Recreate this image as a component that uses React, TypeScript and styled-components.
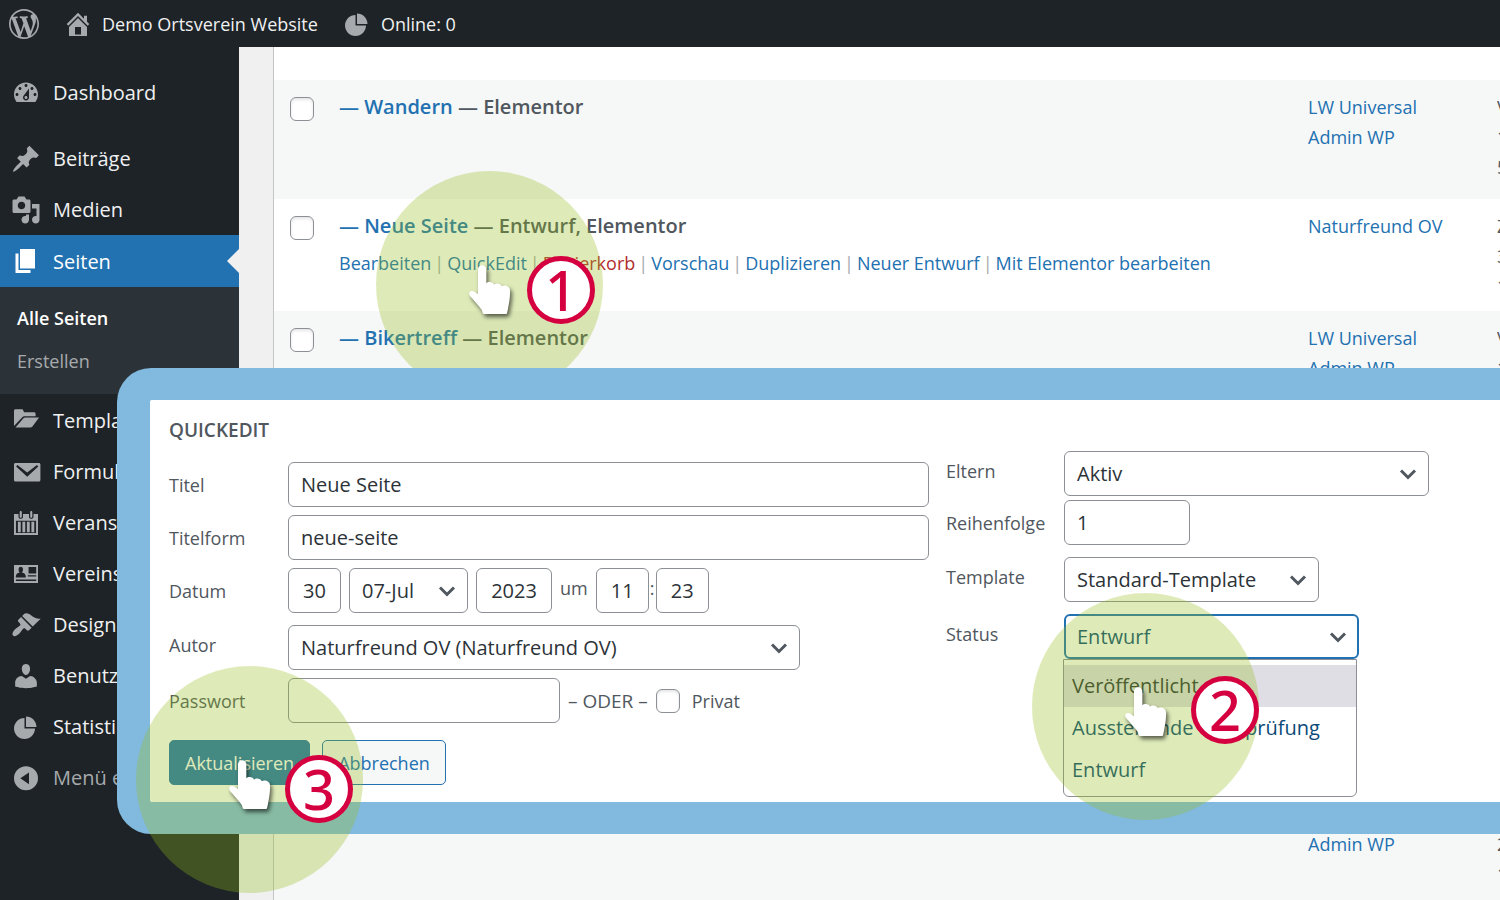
import React from 'react';
import styled, { createGlobalStyle, css } from 'styled-components';

const font = "'Open Sans', 'Noto Sans', sans-serif";

const GlobalStyle = createGlobalStyle`
  *, *::before, *::after { box-sizing: border-box; }
  body { margin: 0; background: #f0f0f1; font-family: ${font}; font-size: 18px; color: #50575e; }
  ul { margin: 0; padding: 0; list-style: none; }
  a { text-decoration: none; }
  input, select, button { font-family: inherit; }
`;

/* ---------- icons ---------- */

const icons: Record<string, string> = {
  wordpress:
    'M20 10c0-5.51-4.49-10-10-10C4.48 0 0 4.49 0 10c0 5.52 4.48 10 10 10 5.51 0 10-4.48 10-10zM7.78 15.37L4.37 6.22c.55-.02 1.17-.08 1.17-.08.5-.06.44-1.13-.06-1.11 0 0-1.45.11-2.37.11-.18 0-.37 0-.58-.01C4.12 2.69 6.87 1.11 10 1.11c2.33 0 4.45.87 6.05 2.34-.68-.11-1.65.39-1.65 1.58 0 .74.45 1.36.9 2.1.35.61.55 1.36.55 2.46 0 1.49-1.4 5-1.4 5l-3.03-8.37c.54-.02.82-.17.82-.17.5-.05.44-1.25-.06-1.22 0 0-1.44.12-2.38.12-.87 0-2.33-.12-2.33-.12-.5-.03-.56 1.2-.06 1.22l.92.08 1.26 3.41zM17.41 10c.24-.64.74-1.87.43-4.25.7 1.29 1.05 2.71 1.05 4.25 0 3.29-1.73 6.24-4.4 7.78.97-2.59 1.94-5.2 2.92-7.78zM6.1 18.09C3.12 16.65 1.11 13.53 1.11 10c0-1.3.23-2.48.72-3.59C3.25 10.3 4.67 14.2 6.1 18.09zm4.03-6.63l2.58 6.98c-.86.29-1.76.45-2.71.45-.79 0-1.57-.11-2.29-.33.81-2.38 1.62-4.74 2.42-7.1z',
  home: 'M16 8.5l1.53 1.53-1.06 1.06L10 4.6l-6.47 6.49-1.06-1.06L10 2.5l4 4v-2h2v4zm-6-2.46l6 5.99V18H4v-5.97zM12 17v-5H8v5h4z',
  pie: 'M10 10V3c3.87 0 7 3.13 7 7h-7zM9 4v7h7c0 3.87-3.13 7-7 7s-7-3.13-7-7 3.13-7 7-7z',
  dashboard:
    'M3.76 16h12.48c1.1-1.37 1.76-3.11 1.76-5 0-4.42-3.58-8-8-8s-8 3.58-8 8c0 1.89.66 3.63 1.76 5zM10 4c.55 0 1 .45 1 1s-.45 1-1 1-1-.45-1-1 .45-1 1-1zM6 6c.55 0 1 .45 1 1s-.45 1-1 1-1-.45-1-1 .45-1 1-1zm8 0c.55 0 1 .45 1 1s-.45 1-1 1-1-.45-1-1 .45-1 1-1zm-5.37 5.55L12 7v6c0 1.1-.9 2-2 2s-2-.9-2-2c0-.57.24-1.08.63-1.45zM4 10c.55 0 1 .45 1 1s-.45 1-1 1-1-.45-1-1 .45-1 1-1zm12 0c.55 0 1 .45 1 1s-.45 1-1 1-1-.45-1-1 .45-1 1-1zm-5 3c0-.55-.45-1-1-1s-1 .45-1 1 .45 1 1 1 1-.45 1-1z',
  post: 'M10.44 3.02l1.82-1.82 6.36 6.35-1.83 1.82c-1.05-.68-2.48-.57-3.41.36l-.75.75c-.92.93-1.04 2.35-.35 3.41l-1.83 1.82-2.41-2.41-2.8 2.79c-.42.42-3.38 2.71-3.8 2.29s1.86-3.39 2.28-3.81l2.79-2.79L4.1 9.36l1.83-1.82c1.05.69 2.48.57 3.4-.36l.75-.75c.93-.92 1.05-2.35.36-3.41z',
  media:
    'M13 11V4c0-.55-.45-1-1-1h-1.67L9 1H5L3.67 3H2c-.55 0-1 .45-1 1v7c0 .55.45 1 1 1h10c.55 0 1-.45 1-1zM7 4.5c1.38 0 2.5 1.12 2.5 2.5S8.38 9.5 7 9.5 4.5 8.38 4.5 7 5.62 4.5 7 4.5zM14 6h5v10.5c0 1.38-1.12 2.5-2.5 2.5S14 17.88 14 16.5s1.12-2.5 2.5-2.5c.17 0 .34.02.5.05V9h-3V6zm-4 8.05V13h2v3.5c0 1.38-1.12 2.5-2.5 2.5S7 17.88 7 16.5 8.12 14 9.5 14c.17 0 .34.02.5.05z',
  page: 'M6 15V2h10v13H6zm-1 1h8v2H3V5h2v11z',
  folder:
    'M2 3.2c0-.6.5-1 1-1h4.2c.5 0 .8.3 1 .8l.5 1.2h6.6c.7 0 1.1.4 1.1 1v1.6H9.3c-.8 0-1.4.3-1.9.9L2 13.4zM3 14.4l5.3-6.3c.3-.3.7-.5 1.1-.5h9.3l-4.4 6.1c-.4.5-.9.7-1.5.7z',
  mail: 'M3 4h15.600c.6 0 1 .4 1 1v10.400c0 .6-.4 1-1 1H3c-.6 0-1-.4-1-1V5c0-.6.4-1 1-1zM4.300 5.300l-.9 1.100 7.400 6.700 7.400-6.700-.9-1.100-6.500 5z',
  calendar:
    'M2 4h3v2c0 1.600 3 1.600 3 0V4h4v2c0 1.600 3 1.600 3 0V4h3v14H2zM3.300 8.500v8.200h13.400V8.500zM4.600 9.200h1.900v7H4.600zM7.600 9.200h1.900v7H7.600zM10.600 9.200h1.900v7h-1.900zM13.600 9.200h1.900v7h-1.900zM5.800 2.700c0-1 1.400-1 1.400 0v3.200c0 .9-1.400.9-1.400 0zM12.800 2.700c0-1 1.400-1 1.400 0v3.200c0 .9-1.400.9-1.400 0z',
  card: 'M2 4h16v12H2zM6.500 5.200c-1.900 0-1.700 3-.7 3.800-1.400.3-2.600 1-2.600 3.300h6.700c0-2.300-1.200-3-2.600-3.300 1-.8 1.200-3.800-.8-3.800zM11.700 5.400v4.200h5.100V5.400zM11.200 10.800v.9h5.600v-.9zM3.300 13.600v1h13.500v-1z',
  brush:
    'M14.48 11.06L7.41 3.99l1.5-1.5c.5-.56 2.3-.47 3.51.32 1.21.8 1.43 1.28 2.91 2.1 1.18.64 2.45 1.26 4.45.85zm-.71.71L6.7 4.7 4.93 6.47c-.39.39-.39 1.02 0 1.41l1.06 1.06c.39.39.39 1.03 0 1.42-.6.6-1.43 1.11-2.21 1.69-.35.26-.7.53-1.01.84C1.43 14.23.4 16.08 1.4 17.07c.99 1 2.84-.03 4.18-1.36.31-.31.58-.66.85-1.02.57-.78 1.08-1.61 1.69-2.21.39-.39 1.02-.39 1.41 0l1.06 1.06c.39.39 1.02.39 1.41 0z',
  users:
    'M10 9.25c-2.27 0-2.73-3.44-2.73-3.44C7 4.02 7.82 2 9.97 2c2.16 0 2.98 2.02 2.71 3.81 0 0-.41 3.44-2.68 3.44zm0 2.57L12.72 10c2.39 0 4.52 2.33 4.52 4.53v2.49s-3.65 1.13-7.24 1.13c-3.65 0-7.24-1.13-7.24-1.13v-2.49c0-2.25 1.94-4.48 4.47-4.48z',
  collapse: 'M10 2.2a8 8 0 1 0 0 16 8 8 0 0 0 0-16zM12 6.300v7.800L6.200 10.200z',
};

const IconSvg = styled.svg`
  width: 30px;
  height: 30px;
  flex: none;
  fill: currentColor;
  color: #a7aaad;
`;

const Icon = ({ name }: { name: string }) => (
  <IconSvg viewBox="0 0 20 20" aria-hidden="true">
    <path fillRule="evenodd" d={icons[name]} />
  </IconSvg>
);

/* ---------- page frame ---------- */

const Page = styled.div`
  position: relative;
  display: flex;
  flex-direction: column;
  min-height: 100vh;
  overflow: hidden;
`;

const AdminBar = styled.header`
  display: flex;
  align-items: center;
  gap: 24px;
  height: 47px;
  padding: 0 9px;
  background: #1d2327;
`;

const BarLink = styled.a`
  display: flex;
  align-items: center;
  gap: 9px;
  color: #f0f0f1;
  font-size: 18px;
  line-height: 46px;
  white-space: nowrap;
`;

const Body = styled.div`
  display: flex;
  flex: 1;
`;

const Sidebar = styled.nav`
  flex: none;
  width: 239px;
  padding-top: 20px;
  background: #1d2327;
`;

const MenuGroup = styled.ul`
  margin-bottom: 15px;
`;

const MenuLink = styled.a<{ $active?: boolean; $muted?: boolean }>`
  position: relative;
  display: flex;
  align-items: center;
  gap: 12px;
  height: ${(p) => (p.$active ? 52 : 51)}px;
  padding-left: 11px;
  font-size: 20px;
  white-space: nowrap;
  color: ${(p) => (p.$muted ? '#a7aaad' : '#f0f0f1')};
  ${(p) =>
    p.$active &&
    css`
      background: #2271b1;
      color: #fff;
      ${IconSvg} { color: #fff; }
      &::after {
        content: '';
        position: absolute;
        right: 0;
        top: 14px;
        border: 12px solid transparent;
        border-left-width: 0;
        border-right-color: #f0f0f1;
      }
    `}
`;

const SubMenu = styled.ul`
  padding: 10px 0 11px;
  margin-bottom: 1px;
  background: #2c3338;
`;

const SubLink = styled.a<{ $current?: boolean }>`
  display: block;
  padding-left: 17px;
  font-size: 18px;
  line-height: 43px;
  font-weight: ${(p) => (p.$current ? 600 : 400)};
  color: ${(p) => (p.$current ? '#fff' : '#a7aaad')};
`;

const Content = styled.main`
  flex: 1;
  min-width: 0;
  padding-left: 34px;
`;

/* ---------- list of pages ---------- */

const PageTable = styled.table`
  width: 100%;
  table-layout: fixed;
  border-collapse: separate;
  border-spacing: 0;
  border-left: 1px solid #c3c4c7;
  background: #fff;
`;

const Row = styled.tr<{ $h: number; $alt?: boolean }>`
  height: ${(p) => p.$h}px;
  background: ${(p) => (p.$alt ? '#f6f7f7' : '#fff')};
`;

const Cell = styled.td`
  padding: 12px 0 0;
  vertical-align: top;
  line-height: 30px;
  font-size: 18px;
  overflow: hidden;
  white-space: nowrap;
`;

const CheckCell = styled(Cell)`
  padding: 17px 0 0 16px;
`;

const Check = styled.input`
  appearance: none;
  display: block;
  flex: none;
  width: 24px;
  height: 24px;
  margin: 0;
  border: 1px solid #8c8f94;
  border-radius: 6px;
  background: #fff;
  box-shadow: inset 0 2px 3px rgba(0, 0, 0, 0.1);
`;

const Title = styled.strong`
  display: block;
  font-size: 20px;
  font-weight: 600;
`;

const Link = styled.a<{ $danger?: boolean }>`
  color: ${(p) => (p.$danger ? '#b32d2e' : '#2271b1')};
`;

const Line = styled.div`
  min-height: 30px;
`;

const RowActions = styled.div`
  margin-top: 7px;
  color: #a7aaad;
`;

const Divider = styled.span`
  margin: 0 3px;
`;

const actions = ['Bearbeiten', 'QuickEdit', 'Papierkorb', 'Vorschau', 'Duplizieren', 'Neuer Entwurf', 'Mit Elementor bearbeiten'];

type Entry = { h: number; alt?: boolean; title?: string; state?: string; authors?: string[]; date?: string[]; actions?: boolean };

const entries: Entry[] = [
  { h: 33 },
  { h: 119, alt: true, title: 'Wandern', state: 'Elementor', authors: ['LW Universal', 'Admin WP'], date: ['V', '1', '5'] },
  { h: 112, title: 'Neue Seite', state: 'Entwurf, Elementor', authors: ['Naturfreund OV'], date: ['Z', '3', '1'], actions: true },
  { h: 119, alt: true, title: 'Bikertreff', state: 'Elementor', authors: ['LW Universal', 'Admin WP'], date: ['V', '1'] },
  { h: 119 },
  { h: 119, alt: true },
  { h: 119 },
  { h: 113, alt: true, authors: ['', 'Admin WP'], date: ['', '2', '1'] },
];

/* ---------- quick edit ---------- */

const Panel = styled.section`
  position: absolute;
  z-index: 2;
  top: 368px;
  left: 117px;
  right: 0;
  border: 32px solid #82badf;
  border-left-width: 33px;
  border-right: 0;
  border-radius: 34px 0 0 34px;
  background: #fff;
`;

const Form = styled.form`
  display: grid;
  grid-template-columns: minmax(0, 760px) minmax(0, 1fr);
  column-gap: 17px;
  padding: 15px 19px 17px;
`;

const Legend = styled.h2`
  margin: 0 0 17px;
  font-size: 19px;
  line-height: 30px;
  font-weight: 600;
`;

const Column = styled.div<{ $top?: number }>`
  padding-top: ${(p) => p.$top ?? 0}px;
`;

const Field = styled.div<{ $gap?: number }>`
  display: grid;
  grid-template-columns: 118px minmax(0, 1fr);
  align-items: center;
  margin-top: ${(p) => p.$gap ?? 0}px;
`;

const WideField = styled(Field)`
  grid-template-columns: 119px minmax(0, 1fr);
`;

const Label = styled.label<{ $raised?: boolean }>`
  padding-bottom: ${(p) => (p.$raised ? 6 : 0)}px;
  font-size: 18px;
  line-height: 30px;
`;

const Inline = styled.div<{ $gap?: number }>`
  display: flex;
  align-items: center;
  gap: ${(p) => p.$gap ?? 8}px;
`;

const Note = styled.span<{ $raised?: boolean }>`
  padding-bottom: ${(p) => (p.$raised ? 6 : 0)}px;
  font-size: ${(p) => (p.$raised ? 18 : 19)}px;
  line-height: 30px;
  white-space: nowrap;
`;

const Time = styled.div`
  display: flex;
  align-items: center;
`;

const Colon = styled(Note)`
  width: 7px;
  text-align: center;
`;

const control = css`
  height: 45px;
  border: 1px solid #8c8f94;
  border-radius: 6px;
  background: #fff;
  color: #2c3338;
  font-size: 20px;
`;

const Input = styled.input<{ $w?: number; $center?: boolean }>`
  ${control}
  width: ${(p) => (p.$w ? `${p.$w}px` : '100%')};
  padding: 0 ${(p) => (p.$center ? 0 : 12)}px;
  text-align: ${(p) => (p.$center ? 'center' : 'left')};
`;

const SelectBox = styled.div<{ $w: number }>`
  position: relative;
  width: ${(p) => p.$w}px;
  svg {
    position: absolute;
    right: 11px;
    top: 13px;
    width: 20px;
    height: 20px;
    fill: none;
    stroke: #50575e;
    stroke-width: 3;
    pointer-events: none;
  }
`;

const SelectControl = styled.select<{ $open?: boolean }>`
  ${control}
  appearance: none;
  display: block;
  width: 100%;
  padding: 0 12px;
  ${(p) =>
    p.$open &&
    css`
      border: 2px solid #2271b1;
      padding: 0 11px;
      color: #0a4b78;
    `}
`;

const Options = styled.ul`
  position: absolute;
  z-index: 1;
  top: 45px;
  left: -1px;
  right: 2px;
  padding: 5px 0;
  border: 1px solid #8c8f94;
  border-radius: 0 0 6px 6px;
  background: #fff;
`;

const Option = styled.li<{ $hover?: boolean }>`
  padding-left: 8px;
  font-size: 20px;
  line-height: 42px;
  white-space: nowrap;
  background: ${(p) => (p.$hover ? '#dfdee5' : 'transparent')};
  color: ${(p) => (p.$hover ? '#2c3338' : '#0a4b78')};
`;

const Actions = styled.div`
  display: flex;
  gap: 12px;
  margin-top: 17px;
`;

const Button = styled.button<{ $primary?: boolean }>`
  height: 45px;
  padding: 0 15px;
  border: 1px solid #2271b1;
  border-radius: 5px;
  font-size: 18px;
  background: ${(p) => (p.$primary ? '#2271b1' : '#f6f7f7')};
  color: ${(p) => (p.$primary ? '#fff' : '#2271b1')};
`;

type SelectProps = { id: string; value: string; width: number; open?: boolean; label?: string; children?: React.ReactNode };

const Select = ({ id, value, width, open, label, children }: SelectProps) => (
  <SelectBox $w={width}>
    <SelectControl id={id} $open={open} aria-label={label} defaultValue={value}>
      <option value={value}>{value}</option>
    </SelectControl>
    <svg viewBox="0 0 20 20" aria-hidden="true">
      <path d="M3 6.5L10 13.500l7-7" />
    </svg>
    {children}
  </SelectBox>
);

/* ---------- numbered step markers ---------- */

const Spot = styled.div<{ $x: number; $y: number; $z: number }>`
  position: absolute;
  z-index: ${(p) => p.$z};
  left: ${(p) => p.$x}px;
  top: ${(p) => p.$y}px;
  width: 227px;
  height: 227px;
  border-radius: 50%;
  background: rgba(148, 190, 29, 0.31);
  pointer-events: none;
`;

const Hand = styled.svg`
  position: absolute;
  left: 93px;
  top: 94px;
  width: 41px;
  height: 49px;
  overflow: visible;
  fill: #fff;
  filter: drop-shadow(2px 3px 2px rgba(0, 0, 0, 0.6));
`;

const Badge = styled.span<{ $x: number; $y: number }>`
  position: absolute;
  left: ${(p) => p.$x}px;
  top: ${(p) => p.$y}px;
  width: 68px;
  height: 68px;
  border: 5px solid #d5003f;
  border-radius: 50%;
  background: #fff;
  color: #d5003f;
  font-family: 'Noto Sans', 'Open Sans', sans-serif;
  font-size: 56px;
  font-weight: 500;
  line-height: 56px;
  text-align: center;
`;

type StepProps = { n: number; x: number; y: number; badgeX: number; badgeY: number; layer: number };

const Step = ({ n, x, y, badgeX, badgeY, layer }: StepProps) => (
  <Spot $x={x} $y={y} $z={layer}>
    <Hand viewBox="0 0 123 147" aria-hidden="true">
      <path d="M27 88V13a12.500 12.500 0 0 1 25 0V55c4-6 21-6 23 4 5-6 21-4 23 5 8-6 25-1 25 12 1 20-3 38-6 55l-3 14q0 2-3 2H45q-3 0-4-4-2-10-10-18L4 94q-7-10 0-15 9-5 23 9z" />
    </Hand>
    <Badge $x={badgeX} $y={badgeY}>{n}</Badge>
  </Spot>
);

/* ---------- app ---------- */

const topMenu = [
  ['post', 'Beiträge'],
  ['media', 'Medien'],
];

const lowerMenu = [
  ['folder', 'Templates'],
  ['mail', 'Formulare'],
  ['calendar', 'Veranstaltungen'],
  ['card', 'Vereinsdaten'],
  ['brush', 'Design'],
  ['users', 'Benutzer'],
  ['pie', 'Statistiken'],
];

export default function App() {
  return (
    <>
      <GlobalStyle />
      <Page>
        <AdminBar>
          <BarLink href="#" aria-label="WordPress"><Icon name="wordpress" /></BarLink>
          <BarLink href="#"><Icon name="home" />Demo Ortsverein Website</BarLink>
          <BarLink href="#"><Icon name="pie" />Online: 0</BarLink>
        </AdminBar>

        <Body>
          <Sidebar>
            <MenuGroup>
              <li><MenuLink href="#"><Icon name="dashboard" />Dashboard</MenuLink></li>
            </MenuGroup>
            <ul>
              {topMenu.map(([icon, label]) => (
                <li key={label}><MenuLink href="#"><Icon name={icon} />{label}</MenuLink></li>
              ))}
              <li>
                <MenuLink href="#" $active><Icon name="page" />Seiten</MenuLink>
                <SubMenu>
                  <li><SubLink href="#" $current>Alle Seiten</SubLink></li>
                  <li><SubLink href="#">Erstellen</SubLink></li>
                </SubMenu>
              </li>
              {lowerMenu.map(([icon, label]) => (
                <li key={label}><MenuLink href="#"><Icon name={icon} />{label}</MenuLink></li>
              ))}
              <li><MenuLink href="#" $muted><Icon name="collapse" />Menü einklappen</MenuLink></li>
            </ul>
          </Sidebar>

          <Content>
            <PageTable>
              <colgroup>
                <col style={{ width: 65 }} />
                <col />
                <col style={{ width: 189 }} />
                <col style={{ width: 3 }} />
              </colgroup>
              <tbody>
                {entries.map((e, i) => (
                  <Row key={i} $h={e.h} $alt={e.alt}>
                    <CheckCell>{e.title && <Check type="checkbox" aria-label={e.title} />}</CheckCell>
                    <Cell>
                      {e.title && <Title><Link href="#">— {e.title}</Link> — {e.state}</Title>}
                      {e.actions && (
                        <RowActions>
                          {actions.map((a, n) => (
                            <React.Fragment key={a}>
                              {n > 0 && <Divider>|</Divider>}
                              <Link href="#" $danger={a === 'Papierkorb'}>{a}</Link>
                            </React.Fragment>
                          ))}
                        </RowActions>
                      )}
                    </Cell>
                    <Cell>{e.authors?.map((a, n) => <Line key={n}>{a && <Link href="#">{a}</Link>}</Line>)}</Cell>
                    <Cell>{e.date?.map((d, n) => <Line key={n}>{d}</Line>)}</Cell>
                  </Row>
                ))}
              </tbody>
            </PageTable>
          </Content>
        </Body>

        <Step n={1} x={376} y={171} badgeX={151} badgeY={85} layer={1} />

        <Panel>
          <Form onSubmit={(e) => e.preventDefault()}>
            <Column>
              <Legend>QUICKEDIT</Legend>
              <WideField>
                <Label htmlFor="title">Titel</Label>
                <Input id="title" defaultValue="Neue Seite" />
              </WideField>
              <WideField $gap={8}>
                <Label htmlFor="slug">Titelform</Label>
                <Input id="slug" defaultValue="neue-seite" />
              </WideField>
              <WideField $gap={8}>
                <Label htmlFor="day">Datum</Label>
                <Inline>
                  <Input id="day" $w={53} $center defaultValue="30" />
                  <Select id="month" label="Monat" value="07-Jul" width={119} />
                  <Input aria-label="Jahr" $w={76} $center defaultValue="2023" />
                  <Note $raised>um</Note>
                  <Time>
                    <Input aria-label="Stunde" $w={53} $center defaultValue="11" />
                    <Colon $raised>:</Colon>
                    <Input aria-label="Minute" $w={53} $center defaultValue="23" />
                  </Time>
                </Inline>
              </WideField>
              <WideField $gap={12}>
                <Label $raised htmlFor="author">Autor</Label>
                <Select id="author" value="Naturfreund OV (Naturfreund OV)" width={512} />
              </WideField>
              <WideField $gap={8}>
                <Label htmlFor="password">Passwort</Label>
                <Inline>
                  <Input id="password" $w={272} />
                  <Note>– ODER –</Note>
                  <Inline $gap={12}>
                    <Check id="private" type="checkbox" />
                    <Label htmlFor="private">Privat</Label>
                  </Inline>
                </Inline>
              </WideField>
              <Actions>
                <Button $primary type="submit">Aktualisieren</Button>
                <Button type="button">Abbrechen</Button>
              </Actions>
            </Column>

            <Column $top={36}>
              <Field>
                <Label $raised htmlFor="parent">Eltern</Label>
                <Select id="parent" value="Aktiv" width={365} />
              </Field>
              <Field $gap={4}>
                <Label htmlFor="order">Reihenfolge</Label>
                <Input id="order" $w={126} defaultValue="1" />
              </Field>
              <Field $gap={12}>
                <Label $raised htmlFor="template">Template</Label>
                <Select id="template" value="Standard-Template" width={255} />
              </Field>
              <Field $gap={12}>
                <Label $raised htmlFor="status">Status</Label>
                <Select id="status" value="Entwurf" width={295} open>
                  <Options role="listbox" aria-label="Status">
                    <Option role="option" aria-selected="true" $hover>Veröffentlicht</Option>
                    <Option role="option" aria-selected="false">Ausstehende Überprüfung</Option>
                    <Option role="option" aria-selected="false">Entwurf</Option>
                  </Options>
                </Select>
              </Field>
            </Column>
          </Form>
        </Panel>

        <Step n={2} x={1032} y={593} badgeX={159} badgeY={83} layer={3} />
        <Step n={3} x={136} y={666} badgeX={149} badgeY={89} layer={3} />
      </Page>
    </>
  );
}
